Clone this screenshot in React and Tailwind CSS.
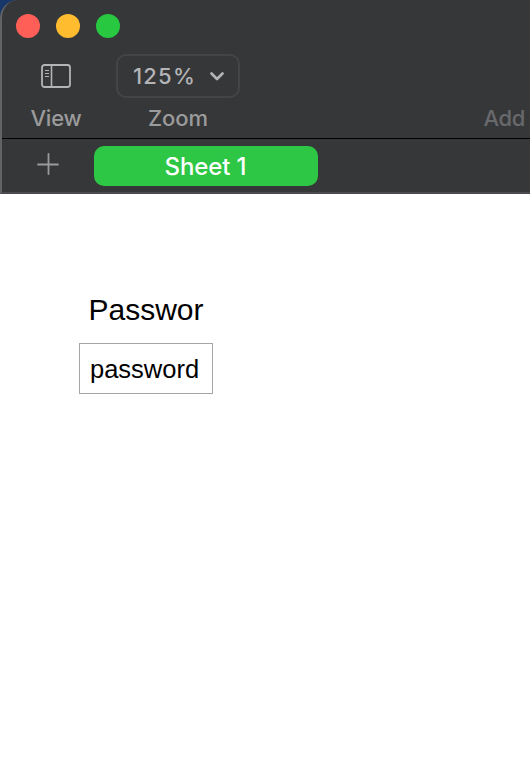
const WindowButtons = () => (
  <div className="flex gap-4 pl-3.5 pt-3.5">
    <span className="size-6 rounded-full bg-[#ff5f57]" />
    <span className="size-6 rounded-full bg-[#febc2e]" />
    <span className="size-6 rounded-full bg-[#28c840]" />
  </div>
)

const SidebarIcon = () => (
  <svg width="30" height="24" viewBox="0 0 30 24" fill="none" stroke="#b4b4b6">
    <rect x="1" y="1" width="28" height="22" rx="2.5" strokeWidth="1.8" />
    <path d="M10.5 1v22" strokeWidth="1.6" />
    <path d="M4 6.5h4M4 9.5h4M4 12.5h4" strokeWidth="1.1" />
  </svg>
)

const ChevronIcon = () => (
  <svg width="16" height="10" viewBox="0 0 16 10" fill="none" stroke="#b4b4b6">
    <path d="M2.5 2.5L8 8L13.5 2.5" strokeWidth="2.7" strokeLinecap="round" strokeLinejoin="round" />
  </svg>
)

const PlusIcon = () => (
  <svg width="22" height="22" viewBox="0 0 22 22" fill="none" stroke="#9b9b9c">
    <path d="M11.5 1v20M1 11.5h20" strokeWidth="1.8" strokeLinecap="round" />
  </svg>
)

function Toolbar() {
  return (
    <div className="flex h-[100px] pt-4 text-[22px] leading-7 font-medium text-[#9b9b9c]">
      <div className="flex w-[108px] flex-col items-center">
        <button className="flex h-[44px] items-center pb-px" aria-label="View">
          <SidebarIcon />
        </button>
        <span className="mt-1.5 tracking-[-0.2px]">View</span>
      </div>
      <div className="ml-1.5 flex w-[124px] flex-col items-center">
        <button className="flex h-[44px] w-full items-center justify-between rounded-[10px] border-2 border-[#444547] pl-[15px] pr-[13px] text-[#b4b4b6]">
          <span className="tracking-[1.2px]">125%</span>
          <ChevronIcon />
        </button>
        <span className="mt-1.5 tracking-[-0.1px]">Zoom</span>
      </div>
      <span className="ml-auto mr-[5px] mt-[50px] tracking-[-0.4px] text-[#68696b]">Add</span>
    </div>
  )
}

function SheetTabs() {
  return (
    <div className="flex h-[53px] items-start border-t border-black pt-[7px]">
      <button className="ml-[35px] mt-[7px]" aria-label="Add sheet">
        <PlusIcon />
      </button>
      <button className="ml-[35px] h-10 w-56 rounded-[10px] bg-[#2dc745] pt-0.5 pr-px text-2xl font-medium tracking-[-0.1px] text-white">
        Sheet 1
      </button>
    </div>
  )
}

export default function App() {
  return (
    <div className="h-[770px] w-full overflow-hidden bg-white">
      <div className="h-[194px] bg-[#17366a] font-['Inter',sans-serif]">
        <div className="h-full overflow-hidden rounded-tl-[18px] border-b-2 border-l-2 border-b-[#4b4a4e] border-l-[#626365] bg-[#363739]">
          <WindowButtons />
          <Toolbar />
          <SheetTabs />
        </div>
      </div>
      <div className="pl-[79px] pt-[98px] font-['Liberation_Sans',Arial,sans-serif] text-black">
        <div className="pl-[9.5px] text-[30px] leading-9">Passwor</div>
        <div className="mt-[15px] flex h-[51px] w-[134px] items-center border border-[#a5a5a5] pl-[10px] pt-0.5 text-[25.5px]">
          password
        </div>
      </div>
    </div>
  )
}
